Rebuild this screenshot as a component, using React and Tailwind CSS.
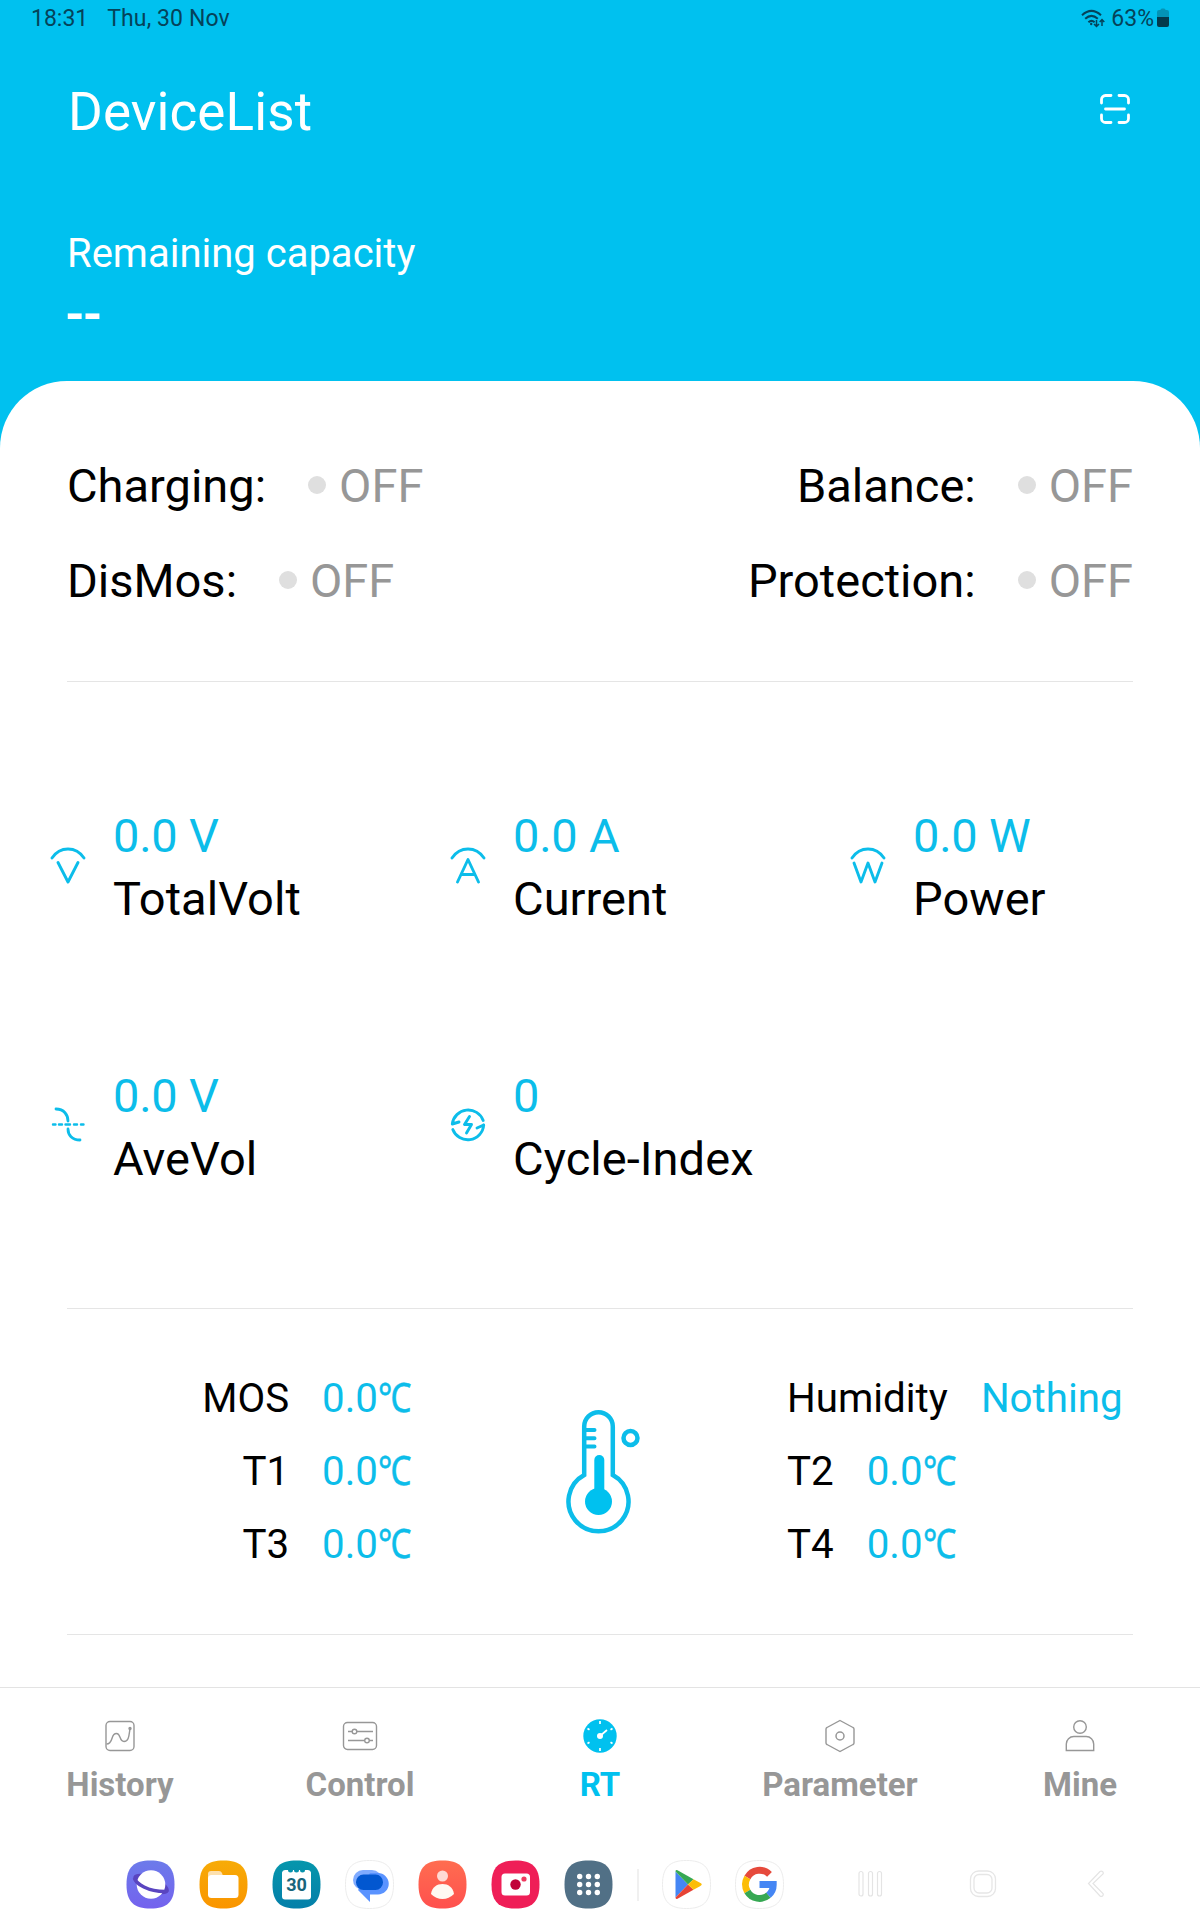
import React from "react";

const CYAN = "#0cbdea";

function StatusBar() {
  return (
    <div className="flex h-9 items-center justify-between pt-px pr-[31px] pl-[31px] text-[23px] leading-[26px] text-[#05435a]">
      <div className="flex gap-[19px]">
        <span>18:31</span>
        <span className="tracking-[0.1px]">Thu, 30 Nov</span>
      </div>
      <div className="flex items-center">
        <svg width="24" height="20" viewBox="0 0 24 20" fill="none" stroke="#05435a" strokeWidth="2" className="mr-[6px]">
          <path d="M1 6.2Q10.500 -2.500 20 6.200M4.200 9.800Q10.500 4 16.800 9.800M7.400 13.300Q10.500 10.500 13.600 13.300" />
          <circle cx="10.200" cy="15" r="1.200" fill="#05435a" stroke="none" />
          <path d="M15.500 11v6M13 15l2.500 2.500L18 15M21 17v-6M18.700 13l2.300-2.500L23.300 13" strokeWidth="1.500" />
        </svg>
        <span className="mr-[3px]">63%</span>
        <svg width="12" height="20" viewBox="0 0 12 20" className="mb-[2px]">
          <path d="M3.500 2a1.500 1.500 0 0 1 1.500-1.500h2A1.500 1.500 0 0 1 8.500 2H10a2 2 0 0 1 2 2v5H0V4a2 2 0 0 1 2-2z" fill="#0494b6" />
          <path d="M0 9h12v8a2 2 0 0 1-2 2H2a2 2 0 0 1-2-2z" fill="#033a4c" />
        </svg>
      </div>
    </div>
  );
}

function Status({ label }) {
  return (
    <div className="flex items-center">
      <span>{label}:</span>
      <i className="mb-px ml-[42px] h-[18px] w-[18px] rounded-full bg-[#dfdfdf]" />
      <span className="ml-[13px] text-[#979797]">OFF</span>
    </div>
  );
}

function Arc() {
  return <path d="M2 12C10 0 26 0 34 12" />;
}

const metricIcons = {
  v: <><Arc /><path d="M8 16.500L18 36 28 16.500" /></>,
  a: <><Arc /><path d="M7.500 36L18 13.500 28.500 36M11.500 28.500h13" /></>,
  w: <><Arc /><path d="M4 17L11 36 18 17 25 36 32 17" /></>,
  ave: (
    <>
      <path d="M6 3C14 3 18 9 18 15M18 23C18 29 22 34 30 34" strokeWidth="2.800" />
      <path d="M3 18.500h2.500M9 18.500h3M15.500 18.500h4.500M24 18.500h3M31 18.500h2.500" strokeWidth="2.400" />
    </>
  ),
  cycle: (
    <>
      <path d="M2.300 18A16 16 0 0 1 33.200 14.500M2.300 18L9 16M33.700 19A16 16 0 0 1 2.800 23.500M33.700 19L27 22" />
      <path d="M19.500 10.500L14.500 18.500H21.500L16.500 27" />
    </>
  ),
};

function Metric({ icon, value, label }) {
  return (
    <div className="flex w-[400px] items-center pl-[50px]">
      <svg width="36" height="38" viewBox="0 0 36 38" fill="none" stroke={CYAN} strokeWidth="2.900" strokeLinecap="round" strokeLinejoin="round" className="mb-[4px]">
        {metricIcons[icon]}
      </svg>
      <div className="ml-[27px] text-[47px] leading-[63px]">
        <div className="tracking-[-0.25px] text-[#0cbdea]">{value}</div>
        <div className="tracking-[0.05px]">{label}</div>
      </div>
    </div>
  );
}

function Reading({ label, value, unit, right }) {
  return (
    <div className={right ? "flex justify-end gap-[33px]" : "flex gap-[33px]"}>
      <span>{label}</span>
      <span className="flex text-[#0cbdea]">
        {value}
        {unit && <span className="w-[33px] origin-left scale-x-[0.83] [-webkit-text-stroke:0.5px]">{unit}</span>}
      </span>
    </div>
  );
}

function Thermometer() {
  return (
    <svg width="76" height="126" viewBox="0 0 76 126" fill="none" stroke="#0cbdea" strokeWidth="4.500">
      <path d="M18.200 67V18.500a14.300 14.300 0 0 1 28.600 0V67a30 30 0 1 1-28.600 0z" />
      <path d="M19 22h9.500M19 30.300h9.500M19 38.500h9.500" strokeWidth="4" strokeLinecap="round" />
      <path d="M33.300 52v40" strokeWidth="10" strokeLinecap="round" stroke="#00c1ef" />
      <circle cx="32.500" cy="93.500" r="13.500" fill="#00c1ef" stroke="none" />
      <circle cx="64.500" cy="30" r="7" />
    </svg>
  );
}

const tabs = [
  {
    name: "History",
    icon: (
      <>
        <rect x="4" y="3.500" width="28" height="29" rx="4" />
        <path d="M4.500 26C12 26 8 15.500 14.500 15.500C19 15.500 17 23.500 22 23.500C27 23.500 27 17 28 10.500" />
        <circle cx="28" cy="10.500" r="1" fill="#979797" />
      </>
    ),
  },
  {
    name: "Control",
    icon: (
      <>
        <rect x="1.500" y="4.500" width="33" height="27" rx="4" />
        <path d="M6 13.500h4M15 13.500h16M6 22.500h16.500M27.500 22.500H31" />
        <circle cx="12.500" cy="13.500" r="2.300" />
        <circle cx="25" cy="22.500" r="2.300" />
      </>
    ),
  },
  {
    name: "RT",
    active: true,
    icon: (
      <>
        <circle cx="18" cy="18" r="16.700" fill="#00c1ef" stroke="none" />
        <path d="M18 3v3M18 30v3M5.500 10.500l2 1.300M5.500 25.500l2-1.300M30.500 10.500l-2 1.300M30.500 25.500l-2-1.300M18 18l7-6" stroke="#fff" strokeWidth="1.700" />
        <circle cx="18" cy="18" r="3" fill="#fff" stroke="none" />
      </>
    ),
  },
  {
    name: "Parameter",
    icon: (
      <>
        <path d="M18 2.500L31 9.500Q32 10 32 11V25Q32 26 31 26.500L18 33.500 5 26.500Q4 26 4 25V11Q4 10 5 9.500Z" />
        <circle cx="18" cy="18" r="4" strokeWidth="1.500" />
      </>
    ),
  },
  {
    name: "Mine",
    icon: (
      <>
        <circle cx="18" cy="9" r="6.300" />
        <path d="M4.300 32.500V26a7.500 7.500 0 0 1 7.500-7.500h12.400a7.500 7.500 0 0 1 7.500 7.500v6.500z" />
      </>
    ),
  },
];

function TabBar() {
  return (
    <nav className="flex h-[154px] border-t border-[#e3e3e3] pt-[30px]">
      {tabs.map((t) => (
        <div key={t.name} className={t.active ? "flex flex-1 flex-col items-center text-[#00c1ef]" : "flex flex-1 flex-col items-center text-[#979797]"}>
          <svg width="36" height="36" viewBox="0 0 36 36" fill="none" stroke="currentColor" strokeWidth="1.400">
            {t.icon}
          </svg>
          <span className="mt-[11px] text-[33px] leading-[40px] font-bold">{t.name}</span>
        </div>
      ))}
    </nav>
  );
}

// Rounded app tile outline shared by all dock icons
const TILE = "M24.500 0.500C41 0.500 48.500 7 48.500 24.500S41 48.500 24.500 48.500 0.500 42 0.500 24.500 8 0.500 24.500 0.500Z";

function DockIcon({ fill, outline, children, last }) {
  return (
    <svg width="49" height="49" viewBox="0 0 49 49" className={last ? "" : "mr-6"}>
      <path d={TILE} fill={fill} stroke={outline ? "#ececec" : "none"} />
      {children}
    </svg>
  );
}

function Dock() {
  return (
    <div className="flex h-[79px] items-center pt-[8px] pl-[126px]">
      <svg width="0" height="0">
        <defs>
          <linearGradient id="violet" x1="0" y1="0" x2="0" y2="1"><stop stopColor="#6c7bea" /><stop offset="1" stopColor="#7462ee" /></linearGradient>
          <linearGradient id="amber" x1="0" y1="0" x2="0" y2="1"><stop stopColor="#f7ab07" /><stop offset="1" stopColor="#fa9500" /></linearGradient>
          <linearGradient id="teal" x1="0" y1="0" x2="0" y2="1"><stop stopColor="#0696ac" /><stop offset="1" stopColor="#047fa9" /></linearGradient>
          <linearGradient id="coral" x1="0" y1="0" x2="0" y2="1"><stop stopColor="#ff6d50" /><stop offset="1" stopColor="#ff504e" /></linearGradient>
        </defs>
      </svg>
      <DockIcon fill="url(#violet)">
        <ellipse cx="25" cy="24" rx="19" ry="7.500" transform="rotate(23 25 24)" fill="#5a45c0" />
        <circle cx="25" cy="24.500" r="14.300" fill="#fff" />
        <path d="M8.500 18C10 24 22 31.500 39 31.500C40 31.500 41 31 41.500 30" fill="none" stroke="#5a45c0" strokeWidth="3.600" />
      </DockIcon>
      <DockIcon fill="url(#amber)">
        <path d="M9 14a3 3 0 0 1 3-3h8q2 0 3 2l1 3v6H9z" fill="#fde0ae" />
        <rect x="9" y="15" width="30.500" height="23" rx="3.500" fill="#fff" />
      </DockIcon>
      <DockIcon fill="url(#teal)">
        <path d="M10 12.500a3 3 0 0 1 3-2.500h3a2.500 2.500 0 0 0 5 0h1a2.500 2.500 0 0 0 5 0h1a2.500 2.500 0 0 0 5 0h3a3 3 0 0 1 3 2.500v24a3 3 0 0 1-3 3H13a3 3 0 0 1-3-3z" fill="#fff" />
        <text x="24.500" y="31.300" textAnchor="middle" fontSize="18" fontWeight="700" fill="#19657b">30</text>
      </DockIcon>
      <DockIcon fill="#fff" outline>
        <rect x="8" y="10" width="29" height="20" rx="10" fill="#80abff" />
        <path d="M25 13h8a8.500 8.500 0 0 1 0 21.500H25v7.500L13 30z" fill="#5a93ff" />
        <rect x="11" y="14.500" width="27" height="15.500" rx="7.500" fill="#0257d0" />
      </DockIcon>
      <DockIcon fill="url(#coral)">
        <circle cx="24.500" cy="16" r="5.500" fill="#ffd9d3" />
        <path d="M13 34C14 27 19 24 24.500 24S35 27 36 34Q31 39 24.500 39T13 34z" fill="#fff9f2" />
      </DockIcon>
      <DockIcon fill="#ef1e57">
        <rect x="10.500" y="13.500" width="28.500" height="22" rx="3.500" fill="#fff" />
        <circle cx="24.500" cy="24.500" r="5.200" fill="#c1043a" />
        <circle cx="33" cy="19" r="2.600" fill="#ee3a5f" />
      </DockIcon>
      <DockIcon fill="#517086" last>
        {[16.5, 24.5, 32.5].map((y) => [15.7, 24.5, 33.3].map((x) => <circle key={x + "-" + y} cx={x} cy={y} r="2.700" fill="#fff" />))}
      </DockIcon>
      <i className="mr-[23px] ml-6 h-8 w-[2px] bg-[#f0f0f0]" />
      <DockIcon fill="#fff" outline>
        <path d="M13.500 11.500V37.500L26 24.500z" fill="#4586f4" />
        <path d="M13.500 11.500Q13.500 9.500 15.500 10.200L31.500 19.200 26 24.500z" fill="#36a853" />
        <path d="M13.500 37.500Q13.500 39.500 15.500 38.800L31.500 29.800 26 24.500z" fill="#e64335" />
        <path d="M31.500 19.200L38 22.800Q41.500 24.500 38 26.200L31.500 29.800 26 24.500z" fill="#fcbd06" />
      </DockIcon>
      <DockIcon fill="#fff" outline last>
        <g fill="none" strokeWidth="6.800">
          <path d="M34.500 14.300A14 14 0 0 0 12.400 17.500" stroke="#e64a3c" />
          <path d="M12.400 17.500A14 14 0 0 0 12.400 31.500" stroke="#fcbd06" />
          <path d="M12.400 31.500A14 14 0 0 0 33.500 35.200" stroke="#36a853" />
          <path d="M33.500 35.200A14 14 0 0 0 38.300 24.500H24.500" stroke="#4586f4" />
        </g>
      </DockIcon>
      <svg width="26" height="28" viewBox="0 0 26 28" fill="none" stroke="#e4e4e4" strokeWidth="1.200" className="mb-[2px] ml-[73px]">
        <rect x="2" y="1.500" width="4" height="24.500" rx="2" /><rect x="11.500" y="1.500" width="4" height="24.500" rx="2" /><rect x="20.500" y="1.500" width="4" height="24.500" rx="2" />
      </svg>
      <svg width="28" height="28" viewBox="0 0 28 28" fill="none" stroke="#e6e6e6" strokeWidth="1.300" className="mb-[2px] ml-[86px]">
        <rect x="1.500" y="1" width="25" height="25.500" rx="8" /><rect x="5" y="4.500" width="18" height="18.500" rx="5" />
      </svg>
      <svg width="20" height="28" viewBox="0 0 20 28" fill="none" stroke="#e4e4e4" strokeWidth="1.200" className="mb-[2px] ml-[89px]">
        <path d="M14 1.500L2.500 13.500 14 26a2 2 0 0 0 3-2.500L7 13.500 17 4a2 2 0 0 0-3-2.500z" />
      </svg>
    </div>
  );
}

export default function App() {
  return (
    <div className="h-[1920px] w-[1200px] overflow-hidden bg-[#00c1ef] font-['Roboto',sans-serif] text-black">
      <header className="h-[381px] text-white">
        <StatusBar />
        <div className="mt-[46px] flex h-[60px] items-center justify-between pr-[70px] pl-[68px]">
          <h1 className="text-[53px] leading-[60px] tracking-[0.1px]">DeviceList</h1>
          <svg width="30" height="30" viewBox="0 0 30 30" fill="none" stroke="#fff" strokeWidth="2.800" strokeLinecap="round" className="mb-[6px]">
            <path d="M1.500 9V5.500a4 4 0 0 1 4-4H11M19 1.500h5.500a4 4 0 0 1 4 4V9M28.500 21v3.500a4 4 0 0 1-4 4H19M11 28.500H5.500a4 4 0 0 1-4-4V21M5.500 15h19" />
          </svg>
        </div>
        <div className="mt-[88px] pl-[67px]">
          <div className="text-[40px] leading-[48px]">Remaining capacity</div>
          <div className="mt-[11px] ml-[-2px] text-[50px] leading-[52px] font-bold tracking-[-2px]">--</div>
        </div>
      </header>
      <main className="h-[1306px] rounded-t-[67px] bg-white">
        <section className="mx-[67px] flex h-[301px] justify-between border-b border-[#e5e5e5] pt-[57px] text-[47px] leading-[95px]">
          <div className="flex flex-col items-start">
            <Status label="Charging" />
            <Status label="DisMos" />
          </div>
          <div className="flex flex-col items-end">
            <Status label="Balance" />
            <Status label="Protection" />
          </div>
        </section>
        <section className="flex h-[626px] flex-wrap content-start gap-y-[134px] pt-[122px]">
          <Metric icon="v" value="0.0 V" label="TotalVolt" />
          <Metric icon="a" value="0.0 A" label="Current" />
          <Metric icon="w" value="0.0 W" label="Power" />
          <Metric icon="ave" value="0.0 V" label="AveVol" />
          <Metric icon="cycle" value="0" label="Cycle-Index" />
        </section>
        <section className="mx-[67px] flex h-[327px] border-y border-[#e5e5e5] pt-[53px] text-[40.3px] leading-[73px]">
          <div className="w-[344px]">
            <Reading right label="MOS" value="0.0" unit="℃" />
            <Reading right label="T1" value="0.0" unit="℃" />
            <Reading right label="T3" value="0.0" unit="℃" />
          </div>
          <div className="mt-[46px] ml-[155px] w-[221px]"><Thermometer /></div>
          <div>
            <Reading label="Humidity" value="Nothing" />
            <Reading label="T2" value="0.0" unit="℃" />
            <Reading label="T4" value="0.0" unit="℃" />
          </div>
        </section>
      </main>
      <footer className="bg-white">
        <TabBar />
        <Dock />
      </footer>
    </div>
  );
}
